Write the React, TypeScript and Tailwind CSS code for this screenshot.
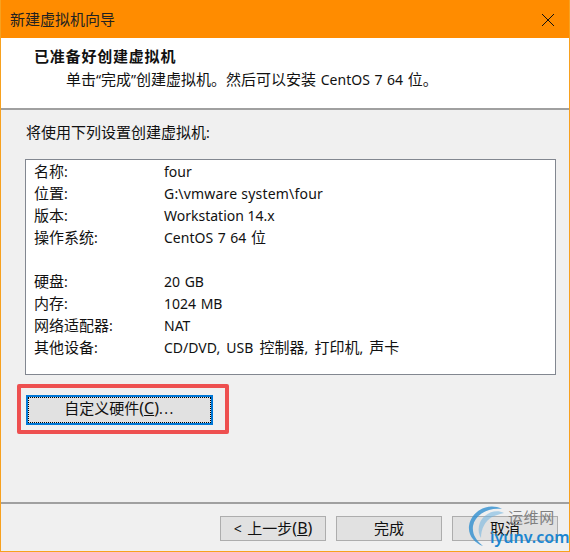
import type { ReactNode } from "react";

function T({ s, size = "text-[15px]" }: { s: string; size?: string }) {
  const parts = s.split(/([\u3000-\u303f\u4e00-\u9fff]+)/);
  return (
    <>
      {parts.map((p, i) =>
        /[\u3000-\u303f\u4e00-\u9fff]/.test(p) ? (
          <span key={i} className={size}>{p}</span>
        ) : (
          <span key={i}>{p}</span>
        )
      )}
    </>
  );
}

function Btn({ children }: { children: ReactNode }) {
  return (
    <button className="w-[106px] h-[25px] bg-[#e1e1e1] border border-[#adadad] text-[14px] leading-[21px] flex items-center justify-center">
      <span>{children}</span>
    </button>
  );
}

export default function App() {
  const rows: [string, string, string][] = [
    ["名称:", "four", ""],
    ["位置:", "G:\\vmware system\\four", "tracking-[0.2px]"],
    ["版本:", "Workstation 14.x", ""],
    ["操作系统:", "CentOS 7 64 位", "[word-spacing:1px]"],
    ["", "", ""],
    ["硬盘:", "20 GB", "[word-spacing:1px]"],
    ["内存:", "1024 MB", "[word-spacing:1px]"],
    ["网络适配器:", "NAT", ""],
    ["其他设备:", "CD/DVD, USB 控制器, 打印机, 声卡", "[word-spacing:2.5px]"],
  ];
  const font = { fontFamily: '"Noto Sans", "Noto Sans CJK SC", sans-serif' };
  return (
    <div style={font} className="relative w-[570px] h-[552px] overflow-hidden flex flex-col bg-[#f0f0f0] border-x border-b border-[#f7a11f] text-[14px] text-[#111]">
      <div className="h-[38px] shrink-0 bg-[#ff8c00] flex items-center justify-between pl-[9px] pr-[14px] text-[15px] text-[#222]">
        <span>新建虚拟机向导</span>
        <svg width="14" height="14" viewBox="0 0 14 14" fill="none" stroke="#111" strokeWidth="1" className="mt-[1px]">
          <path d="M1 1 L13 13 M13 1 L1 13" />
        </svg>
      </div>
      <div className="h-[72px] shrink-0 bg-white border-b-2 border-[#a0a0a0] pl-[33px] pt-[8px]">
        <div className="font-bold leading-[20px] text-[15px] tracking-[0.8px]">已准备好创建虚拟机</div>
        <div className="pl-[32px] leading-[20px] mt-[3px] [word-spacing:1px]">
          <T s="单击“完成”创建虚拟机。然后可以安装 CentOS 7 64 位。" />
        </div>
      </div>
      <div className="flex-1 px-[24px] pt-[12px] flex flex-col">
        <div className="pl-[1px] leading-[20px]"><T s="将使用下列设置创建虚拟机:" /></div>
        <div className="mt-[16px] w-[531px] h-[216px] bg-white border border-[#828790] pl-[8px]">
          {rows.map((r, i) => (
            <div key={i} className="flex h-[22px] items-center">
              <span className="w-[130px] shrink-0"><T s={r[0]} /></span>
              <span className={r[2]}><T s={r[1]} /></span>
            </div>
          ))}
        </div>
        <button className="mt-[20px] ml-[1px] w-[187px] h-[30px] bg-[#e1e1e1] border-2 border-[#0078d7] outline-1 outline-dotted outline-black -outline-offset-3 text-[14px] flex items-center justify-center pb-[4px]">
          <span><T s="自定义硬件" /><span className="text-[16px]">(<span className="underline">C</span>)</span><span className="tracking-[1.5px]">...</span></span>
        </button>
      </div>
      <div className="h-[49px] shrink-0 border-t-2 border-[#a0a0a0] flex justify-end gap-[10px] pr-[11px] pt-[12px]">
        <Btn><span className="[word-spacing:2px]"><T s="< 上一步" /></span><span className="text-[16px]">(<span className="underline">B</span>)</span></Btn>
        <Btn><T s="完成" /></Btn>
        <Btn><T s="取消" /></Btn>
      </div>

      <div className="absolute left-[16px] top-[384px] w-[212px] h-[50px] border-[4px] border-[#ee5050] rounded-[2px]" />

      <svg className="absolute left-[465px] top-[503px]" width="50" height="46" viewBox="0 0 50 46" fill="none">
        <path d="M36 6 C22 -1 5 8 3 23 C2 33 9 40 17 43 C10 37 6 31 7 23 C9 11 23 4 36 6 Z" fill="#2f8fd0" opacity="0.8" />
        <path d="M38 10 C28 5 15 12 13 23 C12 28 13 32 15 35 C15 26 19 18 26 14 C30 12 34 11 38 10 Z" fill="#6db3e0" opacity="0.55" />
      </svg>
      <div className="absolute left-[507px] top-[507px] text-[15px] leading-[20px] text-[#808080] tracking-[0.6px]">运维网</div>
      <div className="absolute left-[489px] top-[527px] text-[16px] leading-[20px] font-semibold text-[#1c86d0]">iyunv.com</div>
    </div>
  );
}
